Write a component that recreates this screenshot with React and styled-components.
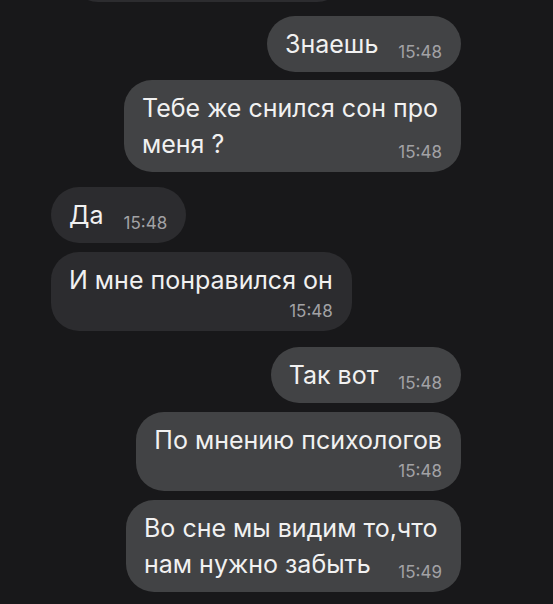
import styled, { createGlobalStyle } from "styled-components";

const GlobalStyle = createGlobalStyle`
  html, body {
    margin: 0;
    padding: 0;
    background: #18181a;
  }
  body {
    font-family: Inter, "Liberation Sans", Arial, sans-serif;
    -webkit-font-smoothing: antialiased;
  }
`;

const Chat = styled.div`
  width: 553px;
  height: 604px;
  overflow: hidden;
  box-sizing: border-box;
  padding: 0 92px 0 51px;
  display: flex;
  flex-direction: column;
  background: #18181a;
`;

const Row = styled.div`
  display: flex;
  justify-content: ${(p) => (p.$out ? "flex-end" : "flex-start")};
  margin-top: ${(p) => p.$gap}px;
`;

const Bubble = styled.div`
  box-sizing: border-box;
  display: flex;
  flex-direction: column;
  width: ${(p) => (p.$width ? `${p.$width}px` : "auto")};
  padding: 10px 19px 10px 18px;
  border-radius: 28px;
  background: ${(p) => (p.$out ? "#424345" : "#2c2c2f")};
  color: #f1f1f1;
`;

const Stub = styled(Bubble)`
  width: 275px;
  height: 56px;
  margin-left: 19px;
`;

const Line = styled.div`
  font-size: 25px;
  line-height: 36px;
  white-space: nowrap;
`;

const LastLine = styled.div`
  display: flex;
  align-items: flex-end;
  justify-content: space-between;
  gap: 20px;
`;

const Time = styled.span`
  font-size: 17px;
  line-height: 19px;
  color: #a2a2a5;
  white-space: nowrap;
`;

const TimeRow = styled.div`
  display: flex;
  justify-content: flex-end;
  margin-top: 4px;
`;

function Message({ out, gap, lines, time, width, timeBelow }) {
  const head = timeBelow ? lines : lines.slice(0, -1);
  const last = lines[lines.length - 1];
  return (
    <Row $out={out} $gap={gap}>
      <Bubble $out={out} $width={width}>
        {head.map((l) => (
          <Line key={l}>{l}</Line>
        ))}
        {timeBelow ? (
          <TimeRow>
            <Time>{time}</Time>
          </TimeRow>
        ) : (
          <LastLine>
            <Line>{last}</Line>
            <Time>{time}</Time>
          </LastLine>
        )}
      </Bubble>
    </Row>
  );
}

const messages = [
  { out: true, gap: 14, lines: ["Знаешь"], time: "15:48" },
  { out: true, gap: 8, lines: ["Тебе же снился сон про", "меня ?"], time: "15:48", width: 337 },
  { out: false, gap: 15, lines: ["Да"], time: "15:48" },
  { out: false, gap: 9, lines: ["И мне понравился он"], time: "15:48", timeBelow: true },
  { out: true, gap: 16, lines: ["Так вот"], time: "15:48" },
  { out: true, gap: 9, lines: ["По мнению психологов"], time: "15:48", timeBelow: true },
  { out: true, gap: 9, lines: ["Во сне мы видим то,что", "нам нужно забыть"], time: "15:49", width: 335 },
];

export default function App() {
  return (
    <>
      <GlobalStyle />
      <Chat>
        <Row $gap={-54}>
          <Stub />
        </Row>
        {messages.map((m, i) => (
          <Message key={i} {...m} />
        ))}
      </Chat>
    </>
  );
}
